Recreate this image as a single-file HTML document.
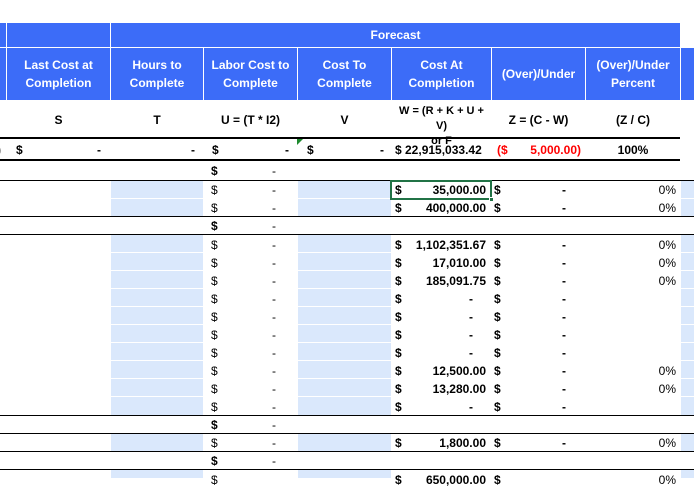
<!DOCTYPE html>
<html><head><meta charset="utf-8"><style>
*{margin:0;padding:0;box-sizing:border-box}
body{width:694px;height:478px;overflow:hidden;background:#fff;font-family:"Liberation Sans",Arial,sans-serif;position:relative;font-size:12px;color:#000}
div{position:absolute}
.b{background:#3c6cf8}
.h{color:#fff;font-weight:bold;font-size:12px;text-align:center;line-height:18px;display:flex;align-items:center;justify-content:center}
.lb{background:#dae8fc}
.t{line-height:18px;white-space:nowrap}
.bd{font-weight:bold}
.r{text-align:right}
.ln{left:0;width:694px;height:1px;background:#000}
</style></head><body>
<!-- header band 1 -->
<div class="b" style="left:0;top:23px;width:6px;height:24px"></div>
<div class="b" style="left:7px;top:23px;width:103px;height:24px"></div>
<div class="b h" style="left:111px;top:23px;width:569px;height:24px">Forecast</div>
<!-- header band 2 -->
<div class="b" style="left:0;top:48px;width:6px;height:52px"></div>
<div class="b h" style="left:7px;top:48px;width:103px;height:52px">Last Cost at<br>Completion</div>
<div class="b h" style="left:111px;top:48px;width:92px;height:52px">Hours to<br>Complete</div>
<div class="b h" style="left:204px;top:48px;width:93px;height:52px">Labor Cost to<br>Complete</div>
<div class="b h" style="left:298px;top:48px;width:93px;height:52px">Cost To<br>Complete</div>
<div class="b h" style="left:392px;top:48px;width:99px;height:52px">Cost At<br>Completion</div>
<div class="b h" style="left:492px;top:48px;width:93px;height:52px">(Over)/Under</div>
<div class="b h" style="left:586px;top:48px;width:94px;height:52px">(Over)/Under<br>Percent</div>
<div class="b" style="left:681px;top:48px;width:13px;height:52px"></div>
<!-- formula row -->
<div class="t bd" style="left:7px;top:111px;width:103px;text-align:center">S</div>
<div class="t bd" style="left:111px;top:111px;width:92px;text-align:center">T</div>
<div class="t bd" style="left:204px;top:111px;width:93px;text-align:center">U = (T * I2)</div>
<div class="t bd" style="left:298px;top:111px;width:93px;text-align:center">V</div>
<div class="bd" style="left:392px;top:104px;width:99px;text-align:center;font-size:11px;line-height:15px">W = (R + K + U + V)<br>or F</div>
<div class="t bd" style="left:492px;top:111px;width:93px;text-align:center">Z = (C - W)</div>
<div class="t bd" style="left:586px;top:111px;width:94px;text-align:center">(Z / C)</div>
<!-- totals -->
<div style="left:0;top:137px;width:680px;height:2px;background:#000"></div>
<div style="left:0;top:159px;width:680px;height:2px;background:#000"></div>
<div style="left:297px;top:139px;width:0;height:0;border-top:6px solid #1e8a2e;border-right:6px solid transparent"></div>
<div class="t bd" style="left:-3px;top:141px">)</div>
<div class="t bd" style="left:16px;top:141px">$</div>
<div class="t bd" style="left:97px;top:141px">-</div>
<div class="t bd" style="left:191px;top:141px">-</div>
<div class="t bd" style="left:212px;top:141px">$</div>
<div class="t bd" style="left:285px;top:141px">-</div>
<div class="t bd" style="left:307px;top:141px">$</div>
<div class="t bd" style="left:380px;top:141px">-</div>
<div class="t bd" style="left:395px;top:141px">$ 22,915,033.42</div>
<div class="t bd" style="left:497px;top:141px;color:#f00">($</div>
<div class="t bd r" style="left:500px;top:141px;width:81px;color:#f00">5,000.00)</div>
<div class="t bd" style="left:586px;top:141px;width:94px;text-align:center">100%</div>

<!-- rows -->
<div class="ln" style="top:180px"></div>
<div class="ln" style="top:216px"></div>
<div class="ln" style="top:234px"></div>
<div class="ln" style="top:415px"></div>
<div class="ln" style="top:433px"></div>
<div class="ln" style="top:451px"></div>
<div class="ln" style="top:469px"></div>

<!-- section rows -->
<div class="t bd" style="left:211px;top:162px">$</div><div class="t" style="left:272px;top:162px">-</div>
<div class="t bd" style="left:211px;top:217px">$</div><div class="t" style="left:272px;top:217px">-</div>
<div class="t bd" style="left:211px;top:416px">$</div><div class="t" style="left:272px;top:416px">-</div>
<div class="t bd" style="left:211px;top:452px">$</div><div class="t" style="left:272px;top:452px">-</div>

<!-- detail rows generated manually -->
<div class="lb" style="left:111px;top:181px;width:92px;height:17px"></div><div class="lb" style="left:298px;top:181px;width:93px;height:17px"></div><div class="lb" style="left:681px;top:181px;width:13px;height:17px"></div>
<div class="t" style="left:211px;top:181px">$</div><div class="t" style="left:272px;top:181px">-</div>
<div class="t bd" style="left:395px;top:181px">$</div><div class="t bd r" style="left:400px;top:181px;width:86px">35,000.00</div>
<div class="t bd" style="left:494px;top:181px">$</div><div class="t bd" style="left:562px;top:181px">-</div><div class="t r" style="left:600px;top:181px;width:76px">0%</div>

<div class="lb" style="left:111px;top:199px;width:92px;height:17px"></div><div class="lb" style="left:298px;top:199px;width:93px;height:17px"></div><div class="lb" style="left:681px;top:199px;width:13px;height:17px"></div>
<div class="t" style="left:211px;top:199px">$</div><div class="t" style="left:272px;top:199px">-</div>
<div class="t bd" style="left:395px;top:199px">$</div><div class="t bd r" style="left:400px;top:199px;width:86px">400,000.00</div>
<div class="t bd" style="left:494px;top:199px">$</div><div class="t bd" style="left:562px;top:199px">-</div><div class="t r" style="left:600px;top:199px;width:76px">0%</div>

<!-- rows 235..415 -->
<div class="lb" style="left:111px;top:235px;width:92px;height:17px"></div><div class="lb" style="left:298px;top:235px;width:93px;height:17px"></div><div class="lb" style="left:681px;top:235px;width:13px;height:17px"></div>
<div class="t" style="left:211px;top:236px">$</div><div class="t" style="left:272px;top:236px">-</div><div class="t bd" style="left:395px;top:236px">$</div><div class="t bd r" style="left:400px;top:236px;width:86px">1,102,351.67</div><div class="t bd" style="left:494px;top:236px">$</div><div class="t bd" style="left:562px;top:236px">-</div><div class="t r" style="left:600px;top:236px;width:76px">0%</div>

<div class="lb" style="left:111px;top:253px;width:92px;height:17px"></div><div class="lb" style="left:298px;top:253px;width:93px;height:17px"></div><div class="lb" style="left:681px;top:253px;width:13px;height:17px"></div>
<div class="t" style="left:211px;top:254px">$</div><div class="t" style="left:272px;top:254px">-</div><div class="t bd" style="left:395px;top:254px">$</div><div class="t bd r" style="left:400px;top:254px;width:86px">17,010.00</div><div class="t bd" style="left:494px;top:254px">$</div><div class="t bd" style="left:562px;top:254px">-</div><div class="t r" style="left:600px;top:254px;width:76px">0%</div>

<div class="lb" style="left:111px;top:271px;width:92px;height:17px"></div><div class="lb" style="left:298px;top:271px;width:93px;height:17px"></div><div class="lb" style="left:681px;top:271px;width:13px;height:17px"></div>
<div class="t" style="left:211px;top:272px">$</div><div class="t" style="left:272px;top:272px">-</div><div class="t bd" style="left:395px;top:272px">$</div><div class="t bd r" style="left:400px;top:272px;width:86px">185,091.75</div><div class="t bd" style="left:494px;top:272px">$</div><div class="t bd" style="left:562px;top:272px">-</div><div class="t r" style="left:600px;top:272px;width:76px">0%</div>

<div class="lb" style="left:111px;top:289px;width:92px;height:17px"></div><div class="lb" style="left:298px;top:289px;width:93px;height:17px"></div><div class="lb" style="left:681px;top:289px;width:13px;height:17px"></div>
<div class="t" style="left:211px;top:290px">$</div><div class="t" style="left:272px;top:290px">-</div><div class="t bd" style="left:395px;top:290px">$</div><div class="t bd r" style="left:400px;top:290px;width:73px">-</div><div class="t bd" style="left:494px;top:290px">$</div><div class="t bd" style="left:562px;top:290px">-</div>

<div class="lb" style="left:111px;top:307px;width:92px;height:17px"></div><div class="lb" style="left:298px;top:307px;width:93px;height:17px"></div><div class="lb" style="left:681px;top:307px;width:13px;height:17px"></div>
<div class="t" style="left:211px;top:308px">$</div><div class="t" style="left:272px;top:308px">-</div><div class="t bd" style="left:395px;top:308px">$</div><div class="t bd r" style="left:400px;top:308px;width:73px">-</div><div class="t bd" style="left:494px;top:308px">$</div><div class="t bd" style="left:562px;top:308px">-</div>

<div class="lb" style="left:111px;top:325px;width:92px;height:17px"></div><div class="lb" style="left:298px;top:325px;width:93px;height:17px"></div><div class="lb" style="left:681px;top:325px;width:13px;height:17px"></div>
<div class="t" style="left:211px;top:326px">$</div><div class="t" style="left:272px;top:326px">-</div><div class="t bd" style="left:395px;top:326px">$</div><div class="t bd r" style="left:400px;top:326px;width:73px">-</div><div class="t bd" style="left:494px;top:326px">$</div><div class="t bd" style="left:562px;top:326px">-</div>

<div class="lb" style="left:111px;top:343px;width:92px;height:17px"></div><div class="lb" style="left:298px;top:343px;width:93px;height:17px"></div><div class="lb" style="left:681px;top:343px;width:13px;height:17px"></div>
<div class="t" style="left:211px;top:344px">$</div><div class="t" style="left:272px;top:344px">-</div><div class="t bd" style="left:395px;top:344px">$</div><div class="t bd r" style="left:400px;top:344px;width:73px">-</div><div class="t bd" style="left:494px;top:344px">$</div><div class="t bd" style="left:562px;top:344px">-</div>

<div class="lb" style="left:111px;top:361px;width:92px;height:17px"></div><div class="lb" style="left:298px;top:361px;width:93px;height:17px"></div><div class="lb" style="left:681px;top:361px;width:13px;height:17px"></div>
<div class="t" style="left:211px;top:362px">$</div><div class="t" style="left:272px;top:362px">-</div><div class="t bd" style="left:395px;top:362px">$</div><div class="t bd r" style="left:400px;top:362px;width:86px">12,500.00</div><div class="t bd" style="left:494px;top:362px">$</div><div class="t bd" style="left:562px;top:362px">-</div><div class="t r" style="left:600px;top:362px;width:76px">0%</div>

<div class="lb" style="left:111px;top:379px;width:92px;height:17px"></div><div class="lb" style="left:298px;top:379px;width:93px;height:17px"></div><div class="lb" style="left:681px;top:379px;width:13px;height:17px"></div>
<div class="t" style="left:211px;top:380px">$</div><div class="t" style="left:272px;top:380px">-</div><div class="t bd" style="left:395px;top:380px">$</div><div class="t bd r" style="left:400px;top:380px;width:86px">13,280.00</div><div class="t bd" style="left:494px;top:380px">$</div><div class="t bd" style="left:562px;top:380px">-</div><div class="t r" style="left:600px;top:380px;width:76px">0%</div>

<div class="lb" style="left:111px;top:397px;width:92px;height:18px"></div><div class="lb" style="left:298px;top:397px;width:93px;height:18px"></div><div class="lb" style="left:681px;top:397px;width:13px;height:18px"></div>
<div class="t" style="left:211px;top:398px">$</div><div class="t" style="left:272px;top:398px">-</div><div class="t bd" style="left:395px;top:398px">$</div><div class="t bd r" style="left:400px;top:398px;width:73px">-</div><div class="t bd" style="left:494px;top:398px">$</div><div class="t bd" style="left:562px;top:398px">-</div>

<div class="lb" style="left:111px;top:434px;width:92px;height:17px"></div><div class="lb" style="left:298px;top:434px;width:93px;height:17px"></div><div class="lb" style="left:681px;top:434px;width:13px;height:17px"></div>
<div class="t" style="left:211px;top:434px">$</div><div class="t" style="left:272px;top:434px">-</div><div class="t bd" style="left:395px;top:434px">$</div><div class="t bd r" style="left:400px;top:434px;width:86px">1,800.00</div><div class="t bd" style="left:494px;top:434px">$</div><div class="t bd" style="left:562px;top:434px">-</div><div class="t r" style="left:600px;top:434px;width:76px">0%</div>

<div class="lb" style="left:111px;top:470px;width:92px;height:8px"></div><div class="lb" style="left:298px;top:470px;width:93px;height:8px"></div><div class="lb" style="left:681px;top:470px;width:13px;height:8px"></div>
<div class="t" style="left:211px;top:471px">$</div><div class="t bd" style="left:395px;top:471px">$</div><div class="t bd r" style="left:400px;top:471px;width:86px">650,000.00</div><div class="t bd" style="left:494px;top:471px">$</div><div class="t r" style="left:600px;top:471px;width:76px">0%</div>

<!-- selection -->
<div style="left:390px;top:180px;width:102px;height:20px;border:2px solid #217346"></div>
<div style="left:489px;top:197px;width:5px;height:5px;background:#217346;border:1px solid #fff"></div>
</body></html>
